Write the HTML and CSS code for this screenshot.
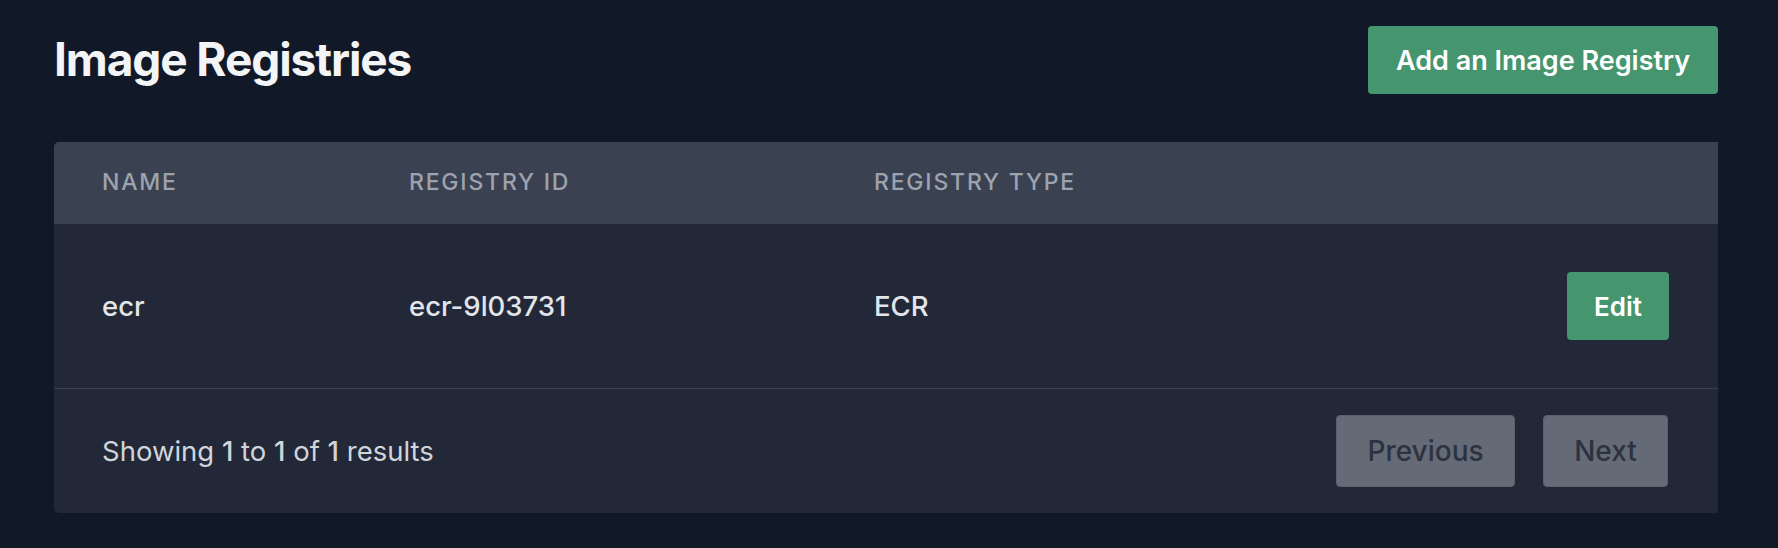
FILE: index.html
```html
<!DOCTYPE html>
<html lang="en">
<head>
<meta charset="utf-8">
<title>Image Registries</title>
<link rel="stylesheet" href="styles.css">
</head>
<body>
<main class="page">
  <header class="page-header">
    <h1 class="title">Image Registries</h1>
    <button class="btn btn-green btn-add">Add an Image Registry</button>
  </header>
  <section class="card">
    <div class="row head">
      <div class="th">Name</div>
      <div class="th">Registry ID</div>
      <div class="th">Registry Type</div>
      <div class="th"></div>
    </div>
    <div class="row body-row">
      <div class="td">ecr</div>
      <div class="td">ecr-9l03731</div>
      <div class="td">ECR</div>
      <div class="td actions"><button class="btn btn-green btn-edit">Edit</button></div>
    </div>
    <div class="footer">
      <p class="summary">Showing <span class="num">1</span> to <span class="num">1</span> of <span class="num">1</span> results</p>
      <nav class="pager">
        <button class="btn btn-page btn-prev">Previous</button>
        <button class="btn btn-page btn-next">Next</button>
      </nav>
    </div>
  </section>
</main>
</body>
</html>
```
FILE: styles.css
```css
* { box-sizing: border-box; }
html, body {
  margin: 0;
  background: #111827;
  height: 100%;
}
body {
  font-family: Inter, "Noto Sans", sans-serif;
  color: #e5e7eb;
}
.page {
  padding: 26px 60px 0 54px;
}
.page-header {
  display: flex;
  justify-content: space-between;
  align-items: center;
  height: 68px;
}
.title {
  margin: 0;
  font-size: 46px;
  font-weight: 700;
  color: #f3f4f6;
  letter-spacing: -1.1px;
  line-height: 1;
  margin-top: -3px;
}
.btn {
  font-family: inherit;
  border: none;
  cursor: pointer;
  border-radius: 4px;
}
.btn-green {
  background: #45956e;
  color: #ffffff;
  font-weight: 600;
}
.btn-add {
  height: 68px;
  width: 350px;
  font-size: 27px;
  padding: 0;
}
.card {
  margin-top: 48px;
  background: #222837;
  border-radius: 5px 0 0 5px;
  overflow: hidden;
}
.row {
  display: grid;
  grid-template-columns: 307px 465px 1fr auto;
  align-items: center;
  padding: 0 49px 0 48px;
}
.head {
  background: #3a4150;
  height: 82px;
}
.th {
  font-size: 23px;
  font-weight: 500;
  color: #9ca3af;
  text-transform: uppercase;
  letter-spacing: 1.8px;
  margin-top: -2px;
}
.body-row {
  height: 165px;
  border-bottom: 1px solid #394150;
}
.td {
  font-size: 27.5px;
  font-weight: 500;
  color: #e2e5ea;
}
.btn-edit {
  width: 102px;
  height: 68px;
  font-size: 26px;
  padding: 0;
}
.footer {
  height: 124px;
  display: flex;
  align-items: center;
  justify-content: space-between;
  padding: 0 50px 0 48px;
}
.summary {
  margin: 0;
  font-size: 27.5px;
  color: #d1d5db;
}
.num { font-weight: 500; }
.pager {
  display: flex;
  gap: 28px;
}
.btn-page {
  height: 72px;
  background: #646a76;
  color: #2c3240;
  font-size: 28px;
  font-weight: 500;
  border: 1px solid #5a606c;
  padding: 0;
}
.btn-prev { width: 179px; }
.btn-next { width: 125px; }
```
